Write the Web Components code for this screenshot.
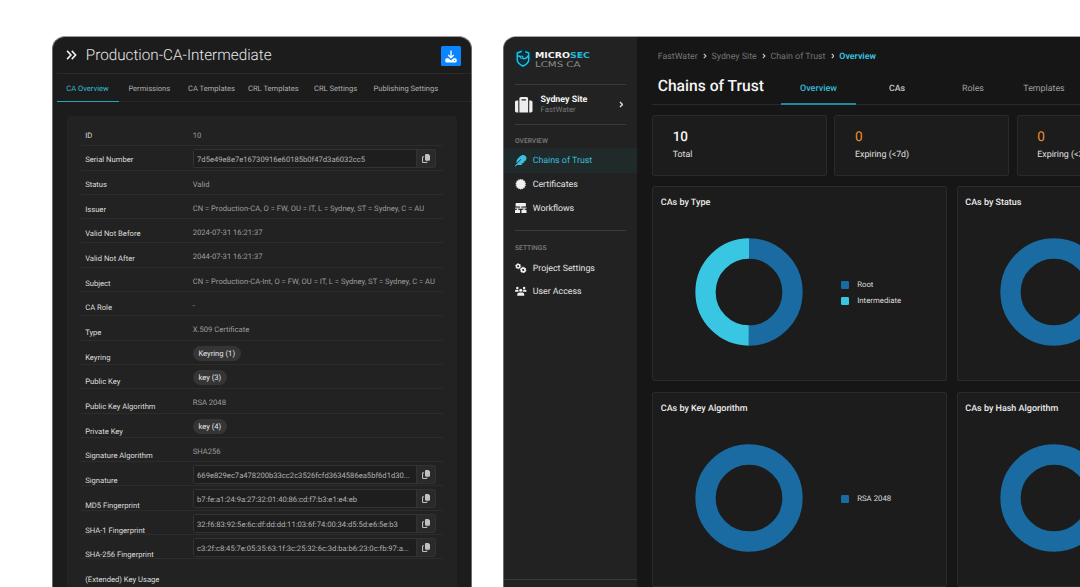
<!DOCTYPE html>
<html lang="en">
<head>
<meta charset="utf-8">
<title>LCMS CA</title>
<style>
  html, body { margin: 0; height: 587px; overflow: hidden; background: #fff; }
  body {
    font-family: Roboto, "Liberation Sans", sans-serif;
    text-rendering: geometricPrecision;
  }
</style>
</head>
<body>
<ca-workspace>
  <ca-detail-window heading="Production-CA-Intermediate">
    <ca-detail-tabs slot="tabs"></ca-detail-tabs>
    <ca-properties></ca-properties>
  </ca-detail-window>
  <ca-dashboard-window>
    <ca-sidebar slot="sidebar"></ca-sidebar>
    <ca-page-header></ca-page-header>
    <ca-stats></ca-stats>
    <ca-charts>
      <ca-donut-card title-text="CAs by Type" items="Root:#1a6ba1,Intermediate:#38c6e3"></ca-donut-card>
      <ca-donut-card title-text="CAs by Status" items=":#1a6ba1"></ca-donut-card>
      <ca-donut-card title-text="CAs by Key Algorithm" items="RSA 2048:#1a6ba1"></ca-donut-card>
      <ca-donut-card title-text="CAs by Hash Algorithm" items=":#1a6ba1"></ca-donut-card>
    </ca-charts>
  </ca-dashboard-window>
</ca-workspace>

<script>
/* Base: every element renders a string into an open shadow root */
class CaElement extends HTMLElement {
  constructor() {
    super();
    this.attachShadow({ mode: "open" });
  }
  connectedCallback() {
    this.shadowRoot.innerHTML = `<style>* { box-sizing: border-box; }${this.styles()}</style>${this.markup()}`;
  }
  styles() { return ":host { display: block; }"; }
  markup() { return "<slot></slot>"; }
}

/* --- Icons --- */
const starburst = () => {
  const pts = [];
  for (let i = 0; i < 28; i++) {
    const r = i % 2 ? 6.5 : 8;
    const a = (i * Math.PI) / 14;
    pts.push(`${(8 + r * Math.sin(a)).toFixed(2)},${(8 - r * Math.cos(a)).toFixed(2)}`);
  }
  return `<polygon points="${pts.join(" ")}" fill="currentColor" stroke="currentColor" stroke-width=".6" stroke-linejoin="round"/>`;
};

const ICONS = {
  "double-chevron": ["0 0 20 18", `<path d="M2 1.5 9 9l-7 7.500M10.500 1.500 17.500 9l-7 7.500" fill="none" stroke="currentColor" stroke-width="2.800"/>`],
  chevron: ["0 0 8 12", `<path d="M1.700 1.500 6.200 6l-4.500 4.500" fill="none" stroke="currentColor" stroke-width="2.400"/>`],
  download: ["0 0 24 26", `<path d="M12 1v14M6.500 10 12 15.500 17.500 10" fill="none" stroke="currentColor" stroke-width="2.600"/><path fill="currentColor" fill-rule="evenodd" d="M3.500 16.500h3.300l5.200 4.300 5.200-4.300h3.300a3 3 0 0 1 3 3V22a3 3 0 0 1-3 3h-17a3 3 0 0 1-3-3v-2.500a3 3 0 0 1 3-3ZM19.200 19.800a1.200 1.200 0 1 0 0 2.400 1.200 1.200 0 0 0 0-2.400Z"/>`],
  copy: ["0 0 16 18", `<path fill="currentColor" d="M8 0h4.800L16 3.200V11.500a2 2 0 0 1-2 2H8a2 2 0 0 1-2-2V2a2 2 0 0 1 2-2Z"/><path d="M4.300 5.500H2.600A1.500 1.500 0 0 0 1.100 7v8.400a1.500 1.500 0 0 0 1.500 1.500h5.800a1.500 1.500 0 0 0 1.500-1.500V15" fill="none" stroke="currentColor" stroke-width="2.200"/>`],
  suitcase: ["0 0 512 512", `<path fill="currentColor" d="M128 480h256V80c0-26.500-21.500-48-48-48H176c-26.500 0-48 21.500-48 48v400zm64-384h128v32H192V96zm320 80v256c0 26.500-21.500 48-48 48h-48V128h48c26.500 0 48 21.500 48 48zM96 480H48c-26.500 0-48-21.500-48-48V176c0-26.500 21.500-48 48-48h48v352z"/>`],
  feather: ["0 0 512 512", `<path fill="currentColor" d="M467.140 44.840c-62.550-62.480-161.670-64.780-252.280 25.730-78.610 78.520-60.980 60.920-85.750 85.660-60.460 60.390-70.390 150.830-63.640 211.170l178.440-178.250c6.260-6.250 16.400-6.250 22.650 0s6.250 16.380 0 22.630L7.040 471.030c-9.380 9.370-9.380 24.570 0 33.940 9.380 9.370 24.600 9.370 33.980 0l66.100-66.030C159.420 454.650 279 457.110 353.950 384h-98.190l147.570-49.140c49.990-49.930 36.380-36.180 46.310-46.860h-97.780l131.540-43.800c45.440-74.460 34.310-148.840-16.260-199.360z"/>`],
  certificate: ["0 0 16 16", starburst()],
  workflow: ["0 0 20 18", `<g fill="currentColor"><rect x="1" width="18" height="6" rx="1.400"/><rect x="0" y="7.900" width="20" height="1.700"/><rect x="3.400" y="9" width="2" height="3"/><rect x="14.600" y="9" width="2" height="3"/><rect x="9" y="5" width="2" height="4"/><rect x="0" y="11.500" width="8.800" height="6.500" rx="1.400"/><rect x="11.200" y="11.500" width="8.800" height="6.500" rx="1.400"/></g>`],
  cogs: ["0 0 22 20", `<g fill="none" stroke="currentColor"><circle cx="6" cy="6" r="3.300" stroke-width="2.800"/><circle cx="6" cy="6" r="4.800" stroke-width="1.800" stroke-dasharray="2.500 2.527"/><circle cx="15.700" cy="13.200" r="3.600" stroke-width="3.200"/><circle cx="15.700" cy="13.200" r="5.200" stroke-width="1.800" stroke-dasharray="2.700 2.745"/></g>`],
  users: ["0 0 22 18", `<g fill="currentColor"><circle cx="4.500" cy="3" r="2.400"/><circle cx="17.500" cy="3" r="2.400"/><circle cx="11" cy="7" r="3"/><path d="M0 10V8.600a2.400 2.400 0 0 1 2.400-2.400h3.800A5 5 0 0 0 7.300 10Z"/><path d="M22 10V8.600a2.400 2.400 0 0 0-2.400-2.400h-3.800A5 5 0 0 1 14.700 10Z"/><path d="M4.300 17.500v-2.300a4 4 0 0 1 4-4h5.400a4 4 0 0 1 4 4v2.300Z"/></g>`],
  shield: ["0 0 32 40", `<path d="M16 0 32 6v16c0 9-7 14.500-16 18C7 36.500 0 31 0 22V6Z" fill="#0c2f3d"/><path d="M13.500 5.500 4.500 9v13c0 6 4.500 10 11.500 13 7-3 11.500-7 11.500-13V9l-7-2.600M5 14.500l6.500 2M15.500 19.500C19 22 23 20 27 14" fill="none" stroke="#24c3e0" stroke-width="2.800"/><circle cx="13.500" cy="17.500" r="2.500" fill="none" stroke="#24c3e0" stroke-width="2.200"/>`],
};

class CaIcon extends CaElement {
  styles() {
    return `
      :host { display: inline-flex; flex: none; }
      svg { display: block; width: 100%; height: 100%; }
    `;
  }
  markup() {
    const [box, body] = ICONS[this.getAttribute("name")];
    return `<svg viewBox="${box}" aria-hidden="true">${body}</svg>`;
  }
}
customElements.define("ca-icon", CaIcon);

/* --- Page frame --- */
class CaWorkspace extends CaElement {
  styles() {
    return `
      :host {
        display: grid;
        grid-template-columns: 420px 700px;
        column-gap: 31px;
        height: 587px;
        padding: 36px 0 0 52px;
        overflow: hidden;
        box-sizing: border-box;
      }
    `;
  }
}
customElements.define("ca-workspace", CaWorkspace);

/* --- Detail window (left) --- */
class CaDetailWindow extends CaElement {
  styles() {
    return `
      :host {
        display: block;
        box-sizing: border-box;
        height: 600px;
        background: #1c1c1c;
        border: 1px solid #6b6b6b;
        border-top-color: #9a9a9a;
        border-radius: 13px 13px 0 0;
        overflow: hidden;
      }
      header {
        display: flex;
        align-items: center;
        height: 37px;
        margin-left: 4px;
        padding: 0 10.500px 0 8.500px;
        border-bottom: 1px solid #2a2a2a;
      }
      .toggle { width: 11px; height: 10px; color: #f2f2f2; }
      h1 {
        flex: 1;
        margin: 0 0 0 9.300px;
        font-size: 15.250px;
        font-weight: 300;
        line-height: 20px;
        color: #e8e8e8;
      }
      button {
        display: flex;
        align-items: center;
        justify-content: center;
        width: 19.500px;
        height: 19.500px;
        margin-top: 2px;
        padding: 0;
        border: 0;
        border-radius: 1.500px;
        background: #0a84ff;
        color: #fff;
      }
      button ca-icon { width: 12px; height: 13px; }
    `;
  }
  markup() {
    return `
      <header>
        <ca-icon class="toggle" name="double-chevron"></ca-icon>
        <h1>${this.getAttribute("heading")}</h1>
        <button aria-label="Download"><ca-icon name="download"></ca-icon></button>
      </header>
      <slot name="tabs"></slot>
      <slot></slot>
    `;
  }
}
customElements.define("ca-detail-window", CaDetailWindow);

class CaDetailTabs extends CaElement {
  styles() {
    return `
      :host {
        display: flex;
        height: 28px;
        margin-left: 4px;
        box-sizing: border-box;
        border-bottom: 1px solid #272727;
        font-size: 7.570px;
        line-height: 29px;
        color: #adadad;
      }
      span { height: 28px; white-space: nowrap; }
      .active { border-bottom: 1px solid #27a5bf; color: #35bdd8; }
    `;
  }
  markup() {
    // label, left padding, full tab width
    const tabs = [
      ["CA Overview", 9.3, 61.5],
      ["Permissions", 9.9, 59.5],
      ["CA Templates", 10, 60],
      ["CRL Templates", 10, 66],
      ["CRL Settings", 10, 59.5],
      ["Publishing Settings", 10, 90],
    ];
    return tabs.map(([t, pad, w], i) =>
      `<span class="${i ? "" : "active"}" style="padding-left:${pad}px;width:${w}px">${t}</span>`
    ).join("");
  }
}
customElements.define("ca-detail-tabs", CaDetailTabs);

class CaPill extends CaElement {
  styles() {
    return `
      :host {
        display: inline-block;
        padding: 0 5.700px;
        height: 15px;
        line-height: 15.500px;
        border-radius: 8px;
        background: #353535;
        color: #e4e4e4;
      }
    `;
  }
}
customElements.define("ca-pill", CaPill);

class CaCopyField extends CaElement {
  styles() {
    return `
      :host {
        display: flex;
        box-sizing: border-box;
        width: 243px;
        height: 19px;
        border: 1px solid #333;
        border-radius: 1.500px;
        background: #1e1e1e;
        color: #b0b0b0;
      }
      .text { flex: 1; padding-left: 3.400px; line-height: 19px; white-space: nowrap; }
      .copy {
        display: flex;
        align-items: center;
        justify-content: center;
        width: 19px;
        border-left: 1px solid #333;
        background: #2a2a2a;
        color: #c0c0c0;
      }
      ca-icon { width: 8px; height: 9px; }
    `;
  }
  markup() {
    return `
      <div class="text"><slot></slot></div>
      <div class="copy"><ca-icon name="copy"></ca-icon></div>
    `;
  }
}
customElements.define("ca-copy-field", CaCopyField);

const PROPERTIES = [
  ["ID", "10"],
  ["Serial Number", "7d5e49e8e7e16730916e60185b0f47d3a6032cc5", "copy"],
  ["Status", "Valid"],
  ["Issuer", "CN = Production-CA, O = FW, OU = IT, L = Sydney, ST = Sydney, C = AU"],
  ["Valid Not Before", "2024-07-31 16:21:37"],
  ["Valid Not After", "2044-07-31 16:21:37"],
  ["Subject", "CN = Production-CA-Int, O = FW, OU = IT, L = Sydney, ST = Sydney, C = AU"],
  ["CA Role", "-"],
  ["Type", "X.509 Certificate"],
  ["Keyring", "Keyring (1)", "pill"],
  ["Public Key", "key (3)", "pill"],
  ["Public Key Algorithm", "RSA 2048"],
  ["Private Key", "key (4)", "pill"],
  ["Signature Algorithm", "SHA256"],
  ["Signature", "669e829ec7a478200b33cc2c3526fcfd3634586ea5bf6d1d30...", "copy"],
  ["MD5 Fingerprint", "b7:fe:a1:24:9a:27:32:01:40:86:cd:f7:b3:e1:e4:eb", "copy"],
  ["SHA-1 Fingerprint", "32:f6:83:92:5e:6c:df:dd:dd:11:03:6f:74:00:34:d5:5d:e6:5e:b3", "copy"],
  ["SHA-256 Fingerprint", "c3:2f:c8:45:7e:05:35:63:1f:3c:25:32:6c:3d:ba:b6:23:0c:fb:97:a...", "copy"],
  ["(Extended) Key Usage", ""],
];

/* Labels and values are two stacks with their own row pitch,
   the rules live in a third layer of the same grid. */
class CaProperties extends CaElement {
  styles() {
    return `
      :host {
        display: grid;
        grid-template-columns: 111.500px 250px;
        align-items: start;
        box-sizing: border-box;
        width: 390.500px;
        height: 500px;
        margin: 14px 0 0 13.700px;
        padding: 6px 14.500px 0;
        border-radius: 4px;
        background: #222;
        font-size: 7.630px;
        white-space: nowrap;
      }
      .rules { grid-area: 1 / 1 / 2 / 3; }
      .rules div { height: 24.300px; border-bottom: 1px solid #2c2c2c; }
      .labels { grid-area: 1 / 1; padding: 1.500px 0 0 4px; color: #dedede; }
      .labels div { height: 24.700px; line-height: 24.700px; }
      .values { grid-area: 1 / 2; padding-top: .300px; color: #9c9c9c; }
      .values div { display: flex; align-items: center; height: 24.300px; }
      .values span { padding-top: 2px; }
    `;
  }
  value(text, kind) {
    if (kind === "copy") return `<ca-copy-field>${text}</ca-copy-field>`;
    if (kind === "pill") return `<ca-pill>${text}</ca-pill>`;
    return `<span>${text}</span>`;
  }
  markup() {
    return `
      <div class="rules">${"<div></div>".repeat(18)}</div>
      <div class="labels">${PROPERTIES.map(([l]) => `<div>${l}</div>`).join("")}</div>
      <div class="values">${PROPERTIES.map(([, v, k]) => `<div>${this.value(v, k)}</div>`).join("")}</div>
    `;
  }
}
customElements.define("ca-properties", CaProperties);

/* --- Dashboard window (right) --- */
class CaDashboardWindow extends CaElement {
  styles() {
    return `
      :host {
        display: grid;
        grid-template-columns: 133px 1fr;
        box-sizing: border-box;
        height: 600px;
        background: #161616;
        border: 1px solid #6b6b6b;
        border-top-color: #a5a5a5;
        border-radius: 13px 0 0 0;
        overflow: hidden;
      }
      main { padding-left: 15px; }
    `;
  }
  markup() {
    return `<slot name="sidebar"></slot><main><slot></slot></main>`;
  }
}
customElements.define("ca-dashboard-window", CaDashboardWindow);

class CaBrand extends CaElement {
  styles() {
    return `
      :host { display: flex; align-items: center; gap: 4.300px; }
      ca-icon { width: 16px; height: 21px; }
      svg { display: block; width: 56px; height: 20px; }
      text { font-family: "DejaVu Sans", sans-serif; }
      .name { font-size: 8.200px; font-weight: 700; fill: #f4f4f4; }
      .name tspan { fill: #24b9d6; }
      .sub { font-size: 7.800px; fill: #8d8d8d; }
    `;
  }
  markup() {
    return `
      <ca-icon name="shield"></ca-icon>
      <svg viewBox="0 0 56 20">
        <text class="name" x="0" y="9" textLength="55" lengthAdjust="spacingAndGlyphs">MICRO<tspan>SEC</tspan></text>
        <text class="sub" x="0" y="18" textLength="45.500" lengthAdjust="spacingAndGlyphs">LCMS CA</text>
      </svg>
    `;
  }
}
customElements.define("ca-brand", CaBrand);

class CaNavItem extends CaElement {
  styles() {
    return `
      :host {
        display: flex;
        align-items: center;
        gap: 6.200px;
        box-sizing: border-box;
        height: 23.700px;
        padding-left: 11px;
        font-size: 8.840px;
        color: #e3e3e3;
      }
      :host([active]) { height: 24.700px; background: #212a2b; color: #37bfda; }
      ca-icon { width: 11.500px; height: 10.500px; color: #f0f0f0; }
      :host([active]) ca-icon { height: 11.500px; margin-top: 1px; color: #37c3df; }
      span { padding-top: 1.400px; }
    `;
  }
  markup() {
    return `<ca-icon name="${this.getAttribute("icon")}"></ca-icon><span><slot></slot></span>`;
  }
}
customElements.define("ca-nav-item", CaNavItem);

class CaSidebar extends CaElement {
  styles() {
    return `
      :host { display: flex; flex-direction: column; height: 550px; background: #222; }
      ca-brand { height: 21px; margin: 11px 0 0 11px; }
      hr { flex: none; width: 110.500px; height: 1px; margin: 0 0 0 11px; border: 0; background: #3a3a3a; }
      .site {
        display: flex;
        align-items: center;
        height: 38.500px;
        margin: 0 14px 0 11px;
      }
      .site > ca-icon:first-child { width: 17.500px; height: 17.500px; color: #ededed; }
      .site div { flex: 1; margin: 1.500px 0 0 8px; font-size: 7.780px; line-height: 10px; color: #767676; }
      .site b { display: block; font-size: 8.900px; color: #f5f5f5; }
      .site > ca-icon:last-child { width: 4.500px; height: 7px; color: #ddd; }
      h2 { margin: 0 0 0 11px; font-size: 6.720px; font-weight: 500; line-height: 10px; color: #7e7e7e; }
      .bottom { width: 100%; margin: auto 0 7px; }
    `;
  }
  markup() {
    return `
      <ca-brand></ca-brand>
      <hr style="margin-top:15px">
      <div class="site">
        <ca-icon name="suitcase"></ca-icon>
        <div><b>Sydney Site</b>FastWater</div>
        <ca-icon name="chevron"></ca-icon>
      </div>
      <hr>
      <h2 style="margin-top:11.5px;margin-bottom:2px">OVERVIEW</h2>
      <ca-nav-item icon="feather" active>Chains of Trust</ca-nav-item>
      <ca-nav-item icon="certificate">Certificates</ca-nav-item>
      <ca-nav-item icon="workflow">Workflows</ca-nav-item>
      <hr style="margin-top:9.5px">
      <h2 style="margin-top:12px;margin-bottom:3.5px">SETTINGS</h2>
      <ca-nav-item icon="cogs">Project Settings</ca-nav-item>
      <ca-nav-item icon="users">User Access</ca-nav-item>
      <hr class="bottom">
    `;
  }
}
customElements.define("ca-sidebar", CaSidebar);

class CaPageHeader extends CaElement {
  styles() {
    return `
      :host { display: block; width: 500px; }
      .crumbs {
        display: flex;
        align-items: center;
        gap: 5px;
        height: 24.500px;
        padding: 14.500px 0 0 5.700px;
        font-size: 8.840px;
        color: #757575;
      }
      .crumbs ca-icon { width: 3.800px; height: 6px; margin-top: -1px; color: #c4c4c4; }
      .crumbs b { color: #35bdd8; }
      .bar { display: flex; height: 43px; border-bottom: 1px solid #2a2a2a; }
      h1 {
        width: 129px;
        margin: 0;
        padding: 12.500px 0 0 5.700px;
        font-size: 15.650px;
        font-weight: 500;
        line-height: 24px;
        color: #f5f5f5;
      }
      .tab {
        height: 43px;
        padding-top: 5px;
        line-height: 44px;
        text-align: center;
        font-size: 8.840px;
        color: #9f9f9f;
      }
      .tab.strong { font-weight: 500; color: #c8c8c8; }
      .tab.active { border-bottom: 2px solid #24889c; font-weight: 500; color: #35bdd8; font-size: 9px; }
    `;
  }
  markup() {
    const sep = `<ca-icon name="chevron"></ca-icon>`;
    return `
      <nav class="crumbs">
        <span>FastWater</span>${sep}<span>Sydney Site</span>${sep}<span>Chain of Trust</span>${sep}<b>Overview</b>
      </nav>
      <div class="bar">
        <h1>Chains of Trust</h1>
        <div class="tab active" style="width:75px">Overview</div>
        <div class="tab strong" style="width:82px">CAs</div>
        <div class="tab" style="width:70px">Roles</div>
        <div class="tab" style="width:72px">Templates</div>
      </div>
    `;
  }
}
customElements.define("ca-page-header", CaPageHeader);

class CaStats extends CaElement {
  styles() {
    return `
      :host { display: flex; gap: 7.500px; margin-top: 10.500px; }
      .card {
        flex: none;
        width: 174.800px;
        height: 60.500px;
        padding: 13px 0 0 19.700px;
        border: 1px solid #2a2a2a;
        border-radius: 2px;
        background: #1c1c1c;
        font-size: 8.840px;
        line-height: 17.700px;
        color: #e2e2e2;
      }
      b { display: block; font-size: 13.500px; font-weight: 500; color: #f8f8f8; }
      .warn b { font-weight: 400; color: #ee8c30; }
    `;
  }
  markup() {
    return `
      <div class="card"><b>10</b>Total</div>
      <div class="card warn"><b>0</b>Expiring (&lt;7d)</div>
      <div class="card warn"><b>0</b>Expiring (&lt;30d)</div>
    `;
  }
}
customElements.define("ca-stats", CaStats);

class CaCharts extends CaElement {
  styles() {
    return `
      :host {
        display: grid;
        grid-template-columns: 295px 295px;
        grid-auto-rows: 195.700px;
        gap: 10.300px 9.500px;
        margin-top: 10.300px;
      }
    `;
  }
}
customElements.define("ca-charts", CaCharts);

class CaDonutCard extends CaElement {
  styles() {
    return `
      :host {
        display: flex;
        flex-direction: column;
        box-sizing: border-box;
        border: 1px solid #2a2a2a;
        border-radius: 2px;
        background: #1c1c1c;
      }
      h3 {
        margin: 9.500px 0 0 7.800px;
        font-size: 8.980px;
        font-weight: 500;
        line-height: 14px;
        color: #ececec;
      }
      .body { display: flex; align-items: center; margin: 27.500px 0 0 42.200px; }
      svg { flex: none; display: block; width: 108px; height: 108px; }
      ul {
        display: grid;
        gap: 3.800px;
        margin: 2px 0 0 38px;
        padding: 0;
        list-style: none;
        font-size: 7.810px;
        line-height: 12px;
        color: #dcdcdc;
      }
      li { display: flex; align-items: center; gap: 7.700px; }
      i { width: 8.300px; height: 8.300px; border-radius: 1.200px; }
    `;
  }
  markup() {
    const items = this.getAttribute("items").split(",").map((s) => s.split(":"));
    const r = 43.5;
    const share = (2 * Math.PI * r) / items.length;
    const rings = items.map(([, color], i) =>
      items.length === 1
        ? `<circle cx="54" cy="54" r="${r}" stroke="${color}"/>`
        : `<circle cx="54" cy="54" r="${r}" stroke="${color}" stroke-dasharray="${share} ${share}" stroke-dashoffset="${-i * share}" transform="rotate(-90 54 54)"/>`
    );
    const legend = items.filter(([name]) => name)
      .map(([name, color]) => `<li><i style="background:${color}"></i>${name}</li>`);
    return `
      <h3>${this.getAttribute("title-text")}</h3>
      <div class="body">
        <svg viewBox="0 0 108 108" fill="none" stroke-width="20.300">${rings.join("")}</svg>
        ${legend.length ? `<ul>${legend.join("")}</ul>` : ""}
      </div>
    `;
  }
}
customElements.define("ca-donut-card", CaDonutCard);
</script>
</body>
</html>
